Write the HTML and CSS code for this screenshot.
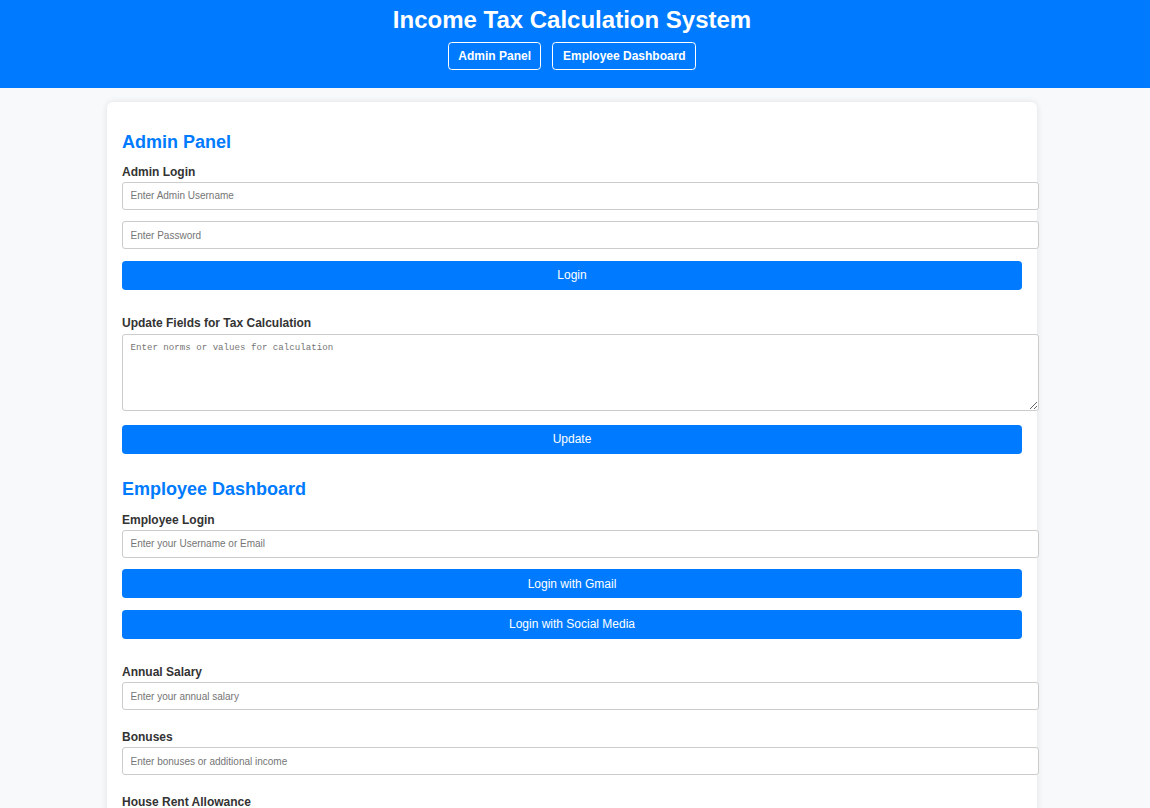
FILE: index.html
```html
<!DOCTYPE html>
<html lang="en">
<head>
<meta charset="UTF-8">
<title>Income Tax Calculation System</title>
<link rel="stylesheet" href="styles.css">
</head>
<body>
<header class="site-header">
  <h1 class="site-title">Income Tax Calculation System</h1>
  <nav class="site-nav">
    <a class="nav-btn" href="#admin">Admin Panel</a>
    <a class="nav-btn" href="#employee">Employee Dashboard</a>
  </nav>
</header>

<div class="page">
<main class="container">
  <section id="admin" class="section">
    <h2 class="section-title">Admin Panel</h2>
    <div class="group">
      <label class="field-label">Admin Login</label>
      <div class="stack">
        <input class="text-input" type="text" placeholder="Enter Admin Username">
        <input class="text-input" type="password" placeholder="Enter Password">
        <button class="btn">Login</button>
      </div>
    </div>
    <div class="group">
      <label class="field-label label-area">Update Fields for Tax Calculation</label>
      <div class="stack">
        <textarea class="text-area" placeholder="Enter norms or values for calculation"></textarea>
        <button class="btn">Update</button>
      </div>
    </div>
  </section>

  <section id="employee" class="section">
    <h2 class="section-title">Employee Dashboard</h2>
    <div class="group">
      <label class="field-label">Employee Login</label>
      <div class="stack">
        <input class="text-input" type="text" placeholder="Enter your Username or Email">
        <button class="btn">Login with Gmail</button>
        <button class="btn">Login with Social Media</button>
      </div>
    </div>
    <div class="group group-field">
      <label class="field-label">Annual Salary</label>
      <input class="text-input" type="text" placeholder="Enter your annual salary">
    </div>
    <div class="group group-field">
      <label class="field-label">Bonuses</label>
      <input class="text-input" type="text" placeholder="Enter bonuses or additional income">
    </div>
    <div class="group group-field">
      <label class="field-label">House Rent Allowance</label>
      <input class="text-input" type="text" placeholder="Enter HRA amount">
    </div>
    <div class="group group-field">
      <label class="field-label">Deductions</label>
      <input class="text-input" type="text" placeholder="Enter deductions (80C, 80D, etc.)">
    </div>
    <div class="group">
      <div class="stack">
        <button class="btn">Calculate Tax</button>
      </div>
    </div>
  </section>
</main>
</div>
</body>
</html>
```

FILE: styles.css
```css
html, body {
  margin: 0;
  padding: 0;
}

body {
  font-family: "Liberation Sans", Arial, sans-serif;
  background: #f8f9fa;
  color: #333;
}

.site-header {
  background: #007bff;
  color: #fff;
  text-align: center;
  padding: 6px 6px 18px 0;
}

.site-title {
  margin: 0 0 8px;
  font-size: 24px;
  line-height: 28px;
  font-weight: bold;
}

.site-nav {
  display: flex;
  justify-content: center;
  gap: 11px;
}

.nav-btn {
  display: inline-block;
  color: #fff;
  text-decoration: none;
  font-size: 12px;
  line-height: 14px;
  font-weight: bold;
  padding: 6px 9.5px;
  border: 1px solid #fff;
  border-radius: 3.75px;
}

.page {
  padding-right: 6px;
}

.container {
  width: 900px;
  margin: 14px auto 0;
  padding: 15px;
  background: #fff;
  border-radius: 6px;
  box-shadow: 0 0 7.5px rgba(0, 0, 0, 0.1);
}

.section-title {
  margin: 14.5px 0 12px;
  font-size: 18px;
  line-height: 21px;
  font-weight: bold;
  color: #007bff;
}

.section + .section .section-title {
  margin-bottom: 13px;
}

.group {
  margin-bottom: 26px;
}

.section > .group:last-child {
  margin-bottom: 25px;
}

.group-field {
  margin-bottom: 19.5px;
}

.field-label {
  display: block;
  font-size: 12px;
  line-height: 14px;
  font-weight: bold;
  color: #333;
  margin-bottom: 3px;
}

.group-field .field-label {
  margin-bottom: 3.5px;
}

.label-area {
  margin-bottom: 4px;
}

.stack {
  display: flex;
  flex-direction: column;
  align-items: flex-start;
  gap: 11.5px;
}

.text-input,
.text-area {
  display: block;
  width: 900px;
  padding: 7.5px;
  border: 1px solid #ccc;
  border-radius: 3px;
  background: #fff;
  color: #333;
  margin: 0;
}

.text-input {
  font-family: "Liberation Sans", Arial, sans-serif;
  font-size: 10px;
  line-height: 11px;
  height: 11px;
}

.text-area {
  font-family: "Liberation Mono", "DejaVu Sans Mono", monospace;
  font-size: 9.15px;
  line-height: 11px;
  height: 60px;
  margin-bottom: 2.5px;
}

.text-input::placeholder,
.text-area::placeholder {
  color: #757575;
}

.btn {
  display: block;
  width: 900px;
  margin: 0;
  padding: 7.5px;
  border: none;
  border-radius: 3.75px;
  background: #007bff;
  color: #fff;
  font-family: "Liberation Sans", Arial, sans-serif;
  font-size: 12px;
  line-height: 14px;
  cursor: pointer;
}
```
